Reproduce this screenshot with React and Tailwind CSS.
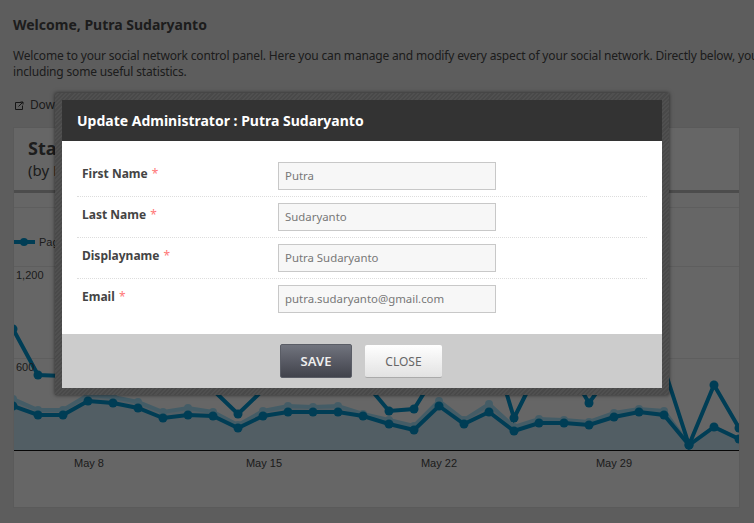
const xs = [13,38,63,88,113,138,163,188,213,238,263,288,313,338,363,389,414,439,464,489,514,539,564,589,614,639,664,689,714,739];
const lower = [406,415,415,401,403,408,418,415,416,428,416,412,412,412,416,424,430,406,424,412,431,423,423,425,417,412,415,445,427,439];
const halo = [399,410,410,395,397,402,412,408,412,425,411,406,407,406,414,420,426,401,420,404,427,419,420,422,413,409,411,445,427,439];
const upper = [329,375,376,350,350,340,340,345,390,414,390,350,340,345,380,411,409,369,390,335,418,368,361,403,369,370,368,445,385,428];
const Y0 = 208;
const X0 = 14;
const pts = (a) => a.map((y, i) => `${xs[i] - X0},${y - Y0}`).join(" ");
const ticks = [["May 8", 75], ["May 15", 250], ["May 22", 425], ["May 29", 600]];
const LINE = "#0088bc";
const HALO = "#98cde2";
const AREA = "#b6d0de";
const TXT = "#404040";

function Chart() {
  return (
    <svg width="725" height="298" className="block" style={{ fontFamily: "'Liberation Sans', sans-serif" }}>
      <line x1="0" x2="725" y1="58.5" y2="58.5" stroke="#d0d0d0" />
      <line x1="0" x2="725" y1="150.5" y2="150.5" stroke="#d0d0d0" />
      <polygon points={`-1,242 ${pts(halo)} 725,242`} fill={AREA} />
      <polyline points={pts(halo)} fill="none" stroke={HALO} strokeWidth="4" />
      {xs.map((x, i) => <circle key={i} cx={x - X0} cy={halo[i] - Y0} r="4" fill={HALO} />)}
      <polyline points={pts(upper)} fill="none" stroke={LINE} strokeWidth="4" />
      {xs.map((x, i) => <circle key={i} cx={x - X0} cy={upper[i] - Y0} r="4.5" fill={LINE} />)}
      <polyline points={pts(lower)} fill="none" stroke={LINE} strokeWidth="4" />
      {xs.map((x, i) => <circle key={i} cx={x - X0} cy={lower[i] - Y0} r="4.5" fill={LINE} />)}
      <line x1="0" x2="725" y1="242.5" y2="242.5" stroke="#111111" />
      <line x1="0" x2="21" y1="34" y2="34" stroke={LINE} strokeWidth="4" />
      <circle cx="10" cy="34" r="4" fill={LINE} />
      <text x="25" y="38" fontSize="11" fill={TXT}>Pageviews</text>
      <text x="2" y="71" fontSize="11" fill={TXT}>1,200</text>
      <text x="2" y="163" fontSize="11" fill={TXT}>600</text>
      {ticks.map(([t, x]) => (
        <text key={t} x={x} y="259" fontSize="11" textAnchor="middle" fill={TXT}>{t}</text>
      ))}
    </svg>
  );
}

function Row({ label, value, last }) {
  return (
    <div className={`flex h-[41px] pt-[6px] ${last ? "" : "border-b border-dotted border-[#dddddd]"}`}>
      <div className="w-[201px] pl-[5px] pt-[4px] font-bold text-[12px] leading-[16px] text-[#444444]">
        {label} <span className="ml-[1px] font-normal text-[#ff7777]">*</span>
      </div>
      <div className="h-[28px] w-[218px] border border-[#c8c8c8] bg-[#f7f7f7] pl-[6px] text-[11.4px] leading-[26px] text-[#777777]">
        {value}
      </div>
    </div>
  );
}

export default function App() {
  return (
    <div className="relative h-[523px] w-[754px] overflow-hidden bg-[#cfcfcf] text-[12px] text-[#404040]" style={{ fontFamily: "'Noto Sans', Tahoma, sans-serif" }}>
      <div className="pl-[13px] pt-[16px]">
        <h1 className="text-[14px] leading-[18px] font-bold">Welcome, Putra Sudaryanto</h1>
        <p className="mt-[14px] leading-[16px] tracking-[-0.17px] whitespace-nowrap">
          Welcome to your social network control panel. Here you can manage and modify every aspect of your social network. Directly below, you will find
          <br />
          including some useful statistics.
        </p>
        <div className="mt-[17px] flex h-[16px] items-center gap-[6px] pl-[2px] leading-[16px] tracking-[-0.17px]">
          <svg width="9" height="9" viewBox="0 0 9 9" fill="none" stroke="#303030">
            <path d="M6.5 1.5h-6v7h7v-4" />
            <path d="M3.5 5.5 8 1M5.5 1H8v2.5" />
          </svg>
          <span>Download statistics</span>
        </div>
        <div className="mt-[14px] h-[381px] w-[727px] border border-[#c8c8c8] bg-[#e3e3e3]">
          <div className="h-[65px] border-b-[3px] border-[#a8a8a8] pl-[14px] pt-[9px]">
            <div className="text-[18px] leading-[22px] font-bold">Statistics</div>
            <div className="text-[15px] leading-[22px]">(by Period)</div>
          </div>
          <div className="h-[15px] border-b border-[#d0d0d0]" />
          <Chart />
        </div>
      </div>

      <div className="absolute inset-0 bg-black/55" />

      <div className="absolute left-[55px] top-[93px] w-[614px] bg-[repeating-linear-gradient(135deg,#494949_0px,#494949_1.5px,#505050_1.5px,#505050_3px)] p-[7px] shadow-[0_0_4px_rgba(0,0,0,0.6)]">
        <div className="flex h-[41px] items-center bg-[#333333] pl-[15px] text-[14px] font-bold text-white">
          Update Administrator : Putra Sudaryanto
        </div>
        <div className="h-[193px] bg-white px-[15px] pt-[15px]">
          <Row label="First Name" value="Putra" />
          <Row label="Last Name" value="Sudaryanto" />
          <Row label="Displayname" value="Putra Sudaryanto" />
          <Row label="Email" value="putra.sudaryanto@gmail.com" last />
        </div>
        <div className="flex h-[54px] items-start justify-center gap-[13px] bg-[#cccccc] pr-[2px] pt-[10px]">
          <button className="h-[34px] w-[72px] rounded-[2px] border border-[#5a5d66] bg-gradient-to-b from-[#71747e] to-[#41434c] pt-[1px] text-[13px] font-semibold text-[#eeeeee]">
            SAVE
          </button>
          <button className="mt-[1px] h-[33px] w-[77px] rounded-[2px] border-b border-[#aaaaaa] bg-gradient-to-b from-white to-[#e2e2e2] pt-[1px] text-[12px] text-[#666666]">
            CLOSE
          </button>
        </div>
      </div>
    </div>
  );
}
